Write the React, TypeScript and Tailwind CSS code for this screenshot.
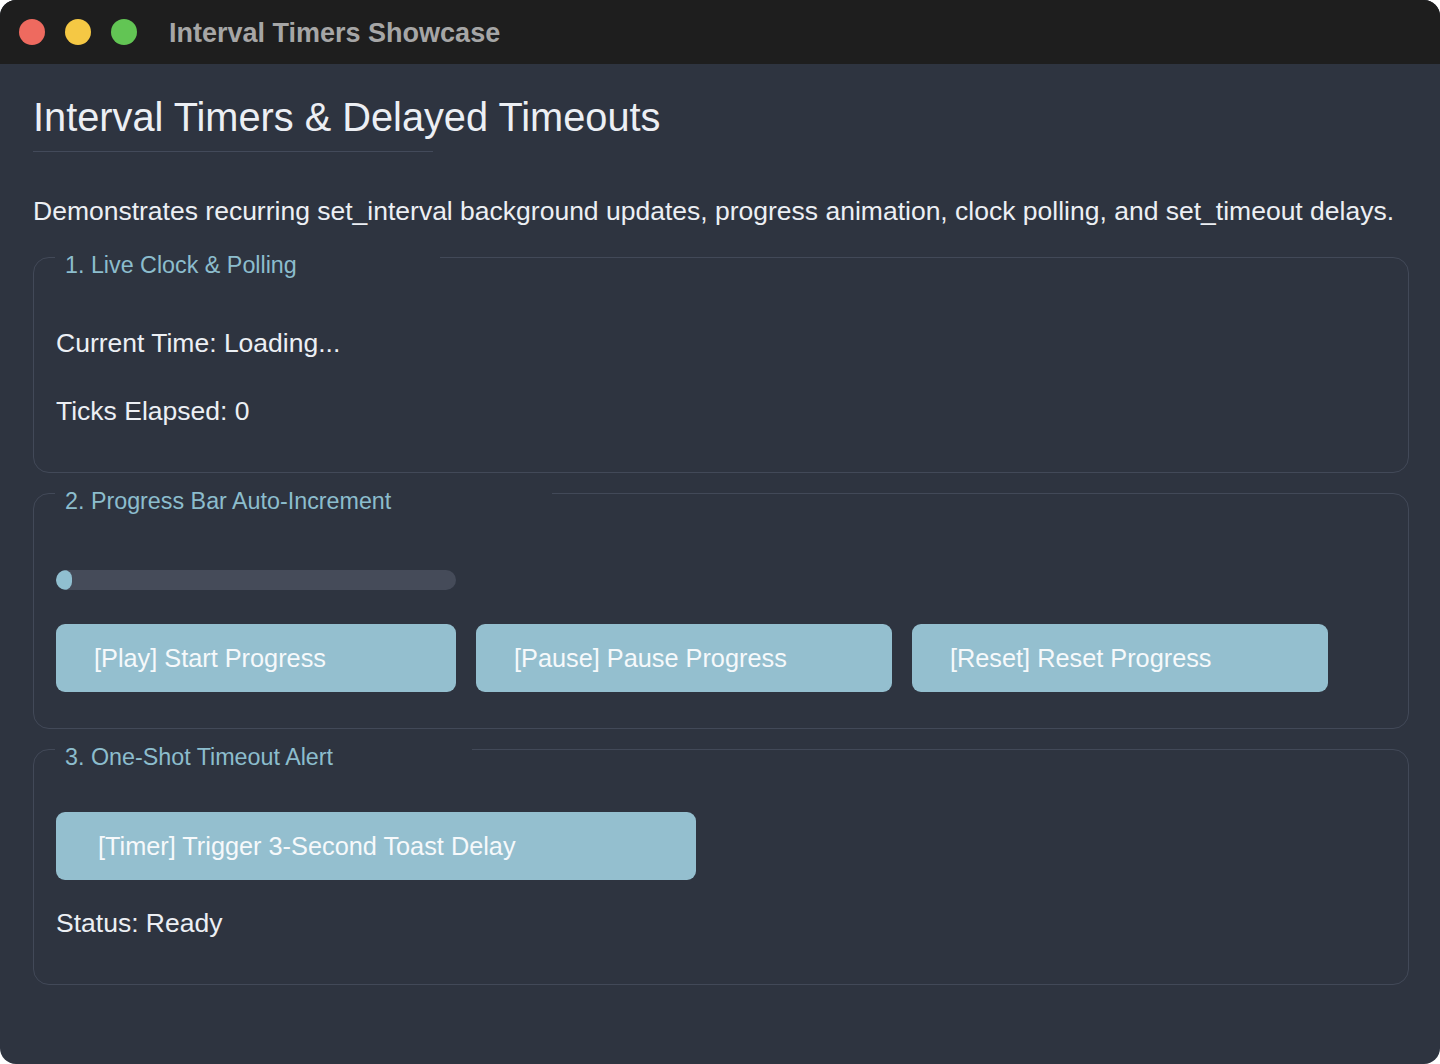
export default function App() {
  const font = "font-['Liberation_Sans',Arial,sans-serif]";

  return (
    <div className={`w-[1440px] h-[1064px] bg-white ${font}`}>
      <div className="h-full rounded-[16px] overflow-hidden bg-[#2e3440] flex flex-col">
        {/* Title bar */}
        <div className="h-[64px] shrink-0 bg-[#1e1e1e] flex items-center pl-[19px]">
          <div className="flex items-center gap-[20px]">
            <span className="w-[26px] h-[26px] rounded-full bg-[#ee6a5f]" />
            <span className="w-[26px] h-[26px] rounded-full bg-[#f5c844]" />
            <span className="w-[26px] h-[26px] rounded-full bg-[#62c554]" />
          </div>
          <span className="ml-[32px] text-[27px] font-bold text-[#a6a6a6] leading-[32px] pt-[2px]">
            Interval Timers Showcase
          </span>
        </div>

        {/* Content */}
        <div className="flex-1 pl-[33px] pr-[31px] pt-[30px]">
          <h1 className="text-[39.75px] leading-[46px] text-[#eceff4] pb-[11px] border-b border-[#434a5a] w-[400px] whitespace-nowrap">
            Interval Timers &amp; Delayed Timeouts
          </h1>

          <p className="mt-[44px] text-[26.5px] leading-[30px] text-[#eceff4] whitespace-nowrap">
            Demonstrates recurring set_interval background updates, progress animation, clock polling, and set_timeout delays.
          </p>

          {/* 1. Live clock */}
          <Group title="1. Live Clock & Polling" legendWidth="w-[385px]" className="mt-[31px] h-[216px]">
            <div className="mt-[50px] text-[26.5px] leading-[30px] text-[#eceff4]">Current Time: Loading...</div>
            <div className="mt-[38px] text-[26.5px] leading-[30px] text-[#eceff4]">Ticks Elapsed: 0</div>
          </Group>

          {/* 2. Progress */}
          <Group title="2. Progress Bar Auto-Increment" legendWidth="w-[497px]" className="mt-[20px] h-[236px]">
            <div className="mt-[56px] w-[400px] h-[20px] rounded-full bg-[#454b59] overflow-hidden">
              <div className="w-[16px] h-full rounded-full bg-[#90bfd0]" />
            </div>
            <div className="mt-[34px] flex gap-[20px]">
              <Btn label="[Play] Start Progress" className="w-[400px]" />
              <Btn label="[Pause] Pause Progress" className="w-[416px]" />
              <Btn label="[Reset] Reset Progress" className="w-[416px]" />
            </div>
          </Group>

          {/* 3. Timeout */}
          <Group title="3. One-Shot Timeout Alert" legendWidth="w-[417px]" className="mt-[20px] h-[236px]">
            <Btn label="[Timer] Trigger 3-Second Toast Delay" className="mt-[42px] w-[640px] pl-[42px]" />
            <div className="mt-[28px] text-[26.5px] leading-[30px] text-[#eceff4]">Status: Ready</div>
          </Group>
        </div>
      </div>
    </div>
  );
}

function Group({
  title,
  legendWidth,
  className,
  children,
}: {
  title: string;
  legendWidth: string;
  className?: string;
  children: React.ReactNode;
}) {
  return (
    <div className={`border border-[#424958] rounded-[16px] pl-[22px] pr-[22px] ${className ?? ''}`}>
      <div className={`relative -mt-[6px] ml-[-1px] ${legendWidth} pl-[10px]`}>
        {/* gap cut into the top border behind the legend */}
        <span className="absolute left-0 right-0 top-[4px] h-[3px] bg-[#2e3440]" />
        <span className="relative block text-[23.3px] leading-[26px] text-[#8cbdcd] whitespace-nowrap">{title}</span>
      </div>
      {children}
    </div>
  );
}

function Btn({ label, className }: { label: string; className?: string }) {
  return (
    <button
      className={`h-[68px] rounded-[9px] bg-[#94bfcf] text-left pl-[38px] text-[25.3px] leading-[30px] text-[#f6f9fb] whitespace-nowrap ${className ?? ''}`}
    >
      {label}
    </button>
  );
}
